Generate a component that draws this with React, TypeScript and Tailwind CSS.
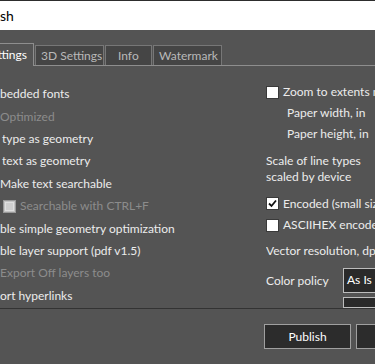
import React from 'react';

const font = { fontFamily: 'Lato, "Noto Sans", sans-serif' };

function Box({ checked = false, disabled = false }: { checked?: boolean; disabled?: boolean }) {
  if (disabled) {
    return (
      <div className="w-[13px] h-[13px] shrink-0 border border-[#9a9a9a] bg-[#c4c4c4] flex items-center justify-center">
        <div className="w-[9px] h-[9px] border border-[#e0e0e0] bg-[#cfcfcf]" />
      </div>
    );
  }
  return (
    <div className="w-[13px] h-[13px] shrink-0 border border-[#3a3a3a] bg-white flex items-center justify-center">
      {checked && (
        <svg width="9" height="9" viewBox="0 0 9 9">
          <path d="M1 4.5 L3.5 7 L8 1.5" stroke="#111" strokeWidth="1.8" fill="none" />
        </svg>
      )}
    </div>
  );
}

function LeftRow({ children, className = '' }: { children: React.ReactNode; className?: string }) {
  return <div className={`h-[22.4px] flex items-center whitespace-nowrap ${className}`}>{children}</div>;
}

export default function App() {
  return (
    <div className="w-[375px] h-[364px] overflow-hidden bg-[#545454] text-[12px] text-[#ececec]" style={font}>
      <div className="h-[2px] bg-[#2d2d2d]" />
      <div className="h-[29px] bg-white flex items-center text-black text-[14px] -mt-[1px]">
        <span>sh</span>
      </div>

      {/* tabs */}
      <div className="mt-[13px] h-[23px] flex items-end whitespace-nowrap">
        <div className="h-[23px] w-[34px] shrink-0 border-t border-r border-[#8e8e8e] flex items-center justify-end pr-[6px] text-white bg-[#545454]">
          ttings
        </div>
        <div className="h-[21px] flex border-b border-[#8e8e8e] flex-1">
          <div className="ml-[1px] w-[69px] shrink-0 border border-b-0 border-[#777] bg-[#454545] text-[#b9b9b9] flex items-center pl-[5px]">
            3D Settings
          </div>
          <div className="ml-[1px] w-[47px] shrink-0 border border-b-0 border-[#777] bg-[#454545] text-[#b9b9b9] flex items-center pl-[12px]">
            Info
          </div>
          <div className="ml-[1px] w-[69px] shrink-0 border border-b-0 border-[#777] bg-[#454545] text-[#b9b9b9] flex items-center pl-[5px]">
            Watermark
          </div>
        </div>
      </div>

      {/* content */}
      <div className="h-[242px] overflow-hidden flex">
        <div className="w-[266px] shrink-0 pt-[17px] flex flex-col overflow-hidden">
          <LeftRow>bedded fonts</LeftRow>
          <LeftRow className="text-[#8c8c8c]">Optimized</LeftRow>
          <LeftRow className="pl-[2px]">type as geometry</LeftRow>
          <LeftRow className="pl-[2px]">text as geometry</LeftRow>
          <LeftRow>Make text searchable</LeftRow>
          <LeftRow className="pl-[3px] gap-[4px] text-[#8c8c8c]">
            <Box disabled />
            <span>Searchable with CTRL+F</span>
          </LeftRow>
          <LeftRow>ble simple geometry optimization</LeftRow>
          <LeftRow>ble layer support (pdf v1.5)</LeftRow>
          <LeftRow className="text-[#8c8c8c]">Export Off layers too</LeftRow>
          <LeftRow>ort hyperlinks</LeftRow>
        </div>

        <div className="flex-1 min-w-0 pt-[16px] flex flex-col whitespace-nowrap overflow-hidden">
          <div className="h-[22px] flex items-center gap-[4px]">
            <Box />
            <span>Zoom to extents mode</span>
          </div>
          <div className="h-[22px] flex items-center pl-[21px]">Paper width, in</div>
          <div className="h-[22px] flex items-center pl-[21px]">Paper height, in</div>
          <div className="mt-[9px] leading-[16px]">
            <div>Scale of line types</div>
            <div>scaled by device</div>
          </div>
          <div className="mt-[8px] h-[22px] flex items-center gap-[4px]">
            <Box checked />
            <span>Encoded (small size)</span>
          </div>
          <div className="mt-[1px] h-[22px] flex items-center gap-[4px]">
            <Box />
            <span>ASCIIHEX encoded</span>
          </div>
          <div className="mt-[5px] h-[22px] flex items-center">Vector resolution, dpi</div>
          <div className="mt-[6px] h-[25px] flex items-center">
            <span className="w-[77px] shrink-0 pt-[2px]">Color policy</span>
            <div className="w-[60px] shrink-0 h-[25px] border border-[#bdbdbd] bg-[#2a2a2a] flex items-center pl-[3px] text-white">
              As Is
            </div>
          </div>
          <div className="mt-[4px] ml-[77px] w-[60px] h-[12px] border border-[#bdbdbd] bg-[#2a2a2a]" />
        </div>
      </div>
      <div className="h-[1px] bg-[#333]" />

      {/* buttons */}
      <div className="mt-[15px] flex pl-[264px] gap-[5px]">
        <div className="w-[87px] h-[25px] shrink-0 border border-[#a0a0a0] bg-[#2c2c2c] flex items-center justify-center text-white">
          Publish
        </div>
        <div className="w-[87px] h-[25px] border border-[#a0a0a0] bg-[#2c2c2c] shrink-0" />
      </div>
    </div>
  );
}
